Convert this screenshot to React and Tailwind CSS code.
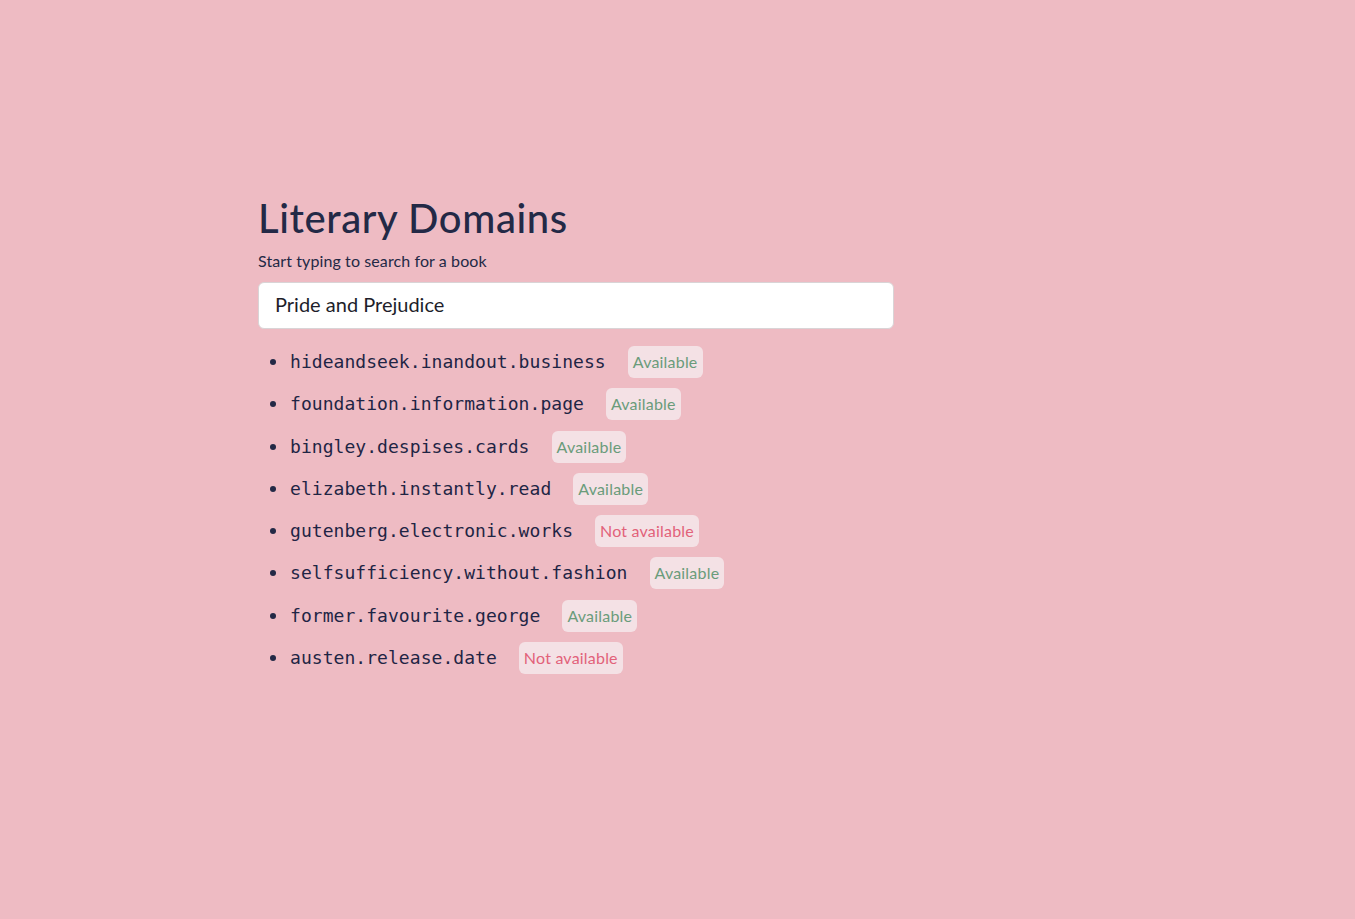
export default function App() {
  const items = [
    ["hideandseek.inandout.business", true],
    ["foundation.information.page", true],
    ["bingley.despises.cards", true],
    ["elizabeth.instantly.read", true],
    ["gutenberg.electronic.works", false],
    ["selfsufficiency.without.fashion", true],
    ["former.favourite.george", true],
    ["austen.release.date", false],
  ];
  return (
    <div className="min-h-[919px] w-full bg-[#eebbc3] text-[#232946]" style={{ fontFamily: "Lato, 'Open Sans', sans-serif" }}>
      <div className="ml-[258px] w-[636px] pt-[194px]">
        <h1 className="text-[40px] leading-[48px] font-medium tracking-[0.6px]">Literary Domains</h1>
        <p className="mt-[9px] text-[16px] leading-[20px] tracking-[0.1px]">Start typing to search for a book</p>
        <div className="mt-[11px] h-[47px] rounded-[6px] border border-[#d9d4d6] bg-white flex items-center px-[16px] pb-[3px] text-[20px] text-[#1e1e2a]">
          Pride and Prejudice
        </div>
        <ul className="mt-[17px]">
          {items.map(([name, ok]) => (
            <li key={name} className="h-[42.3px] flex items-start">
              <div className="flex items-center h-[32px]">
                <span className="ml-[12px] w-[6px] h-[6px] rounded-full bg-[#232946]"></span>
                <span className="ml-[14px] text-[18px] tracking-[0.05px] leading-[22px] text-[#1f2545]" style={{ fontFamily: "'DejaVu Sans Mono', monospace" }}>{name}</span>
                <span className={`ml-[22px] h-[32px] px-[5px] rounded-[6px] bg-[#f4e1e5] text-[16px] tracking-[0.2px] flex items-center ${ok ? "text-[#6a9c7b]" : "text-[#e2627a]"}`}>
                  {ok ? "Available" : "Not available"}
                </span>
              </div>
            </li>
          ))}
        </ul>
      </div>
    </div>
  );
}
